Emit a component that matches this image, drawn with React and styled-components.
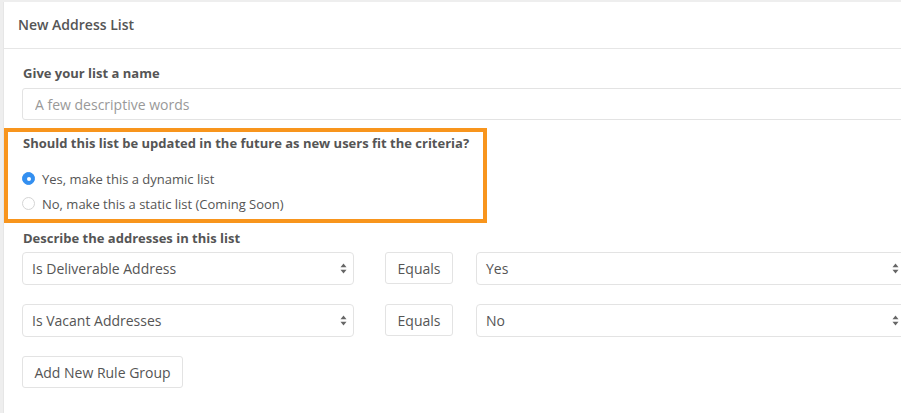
import React from 'react';
import styled, { createGlobalStyle } from 'styled-components';

const GlobalStyle = createGlobalStyle`
  html, body {
    margin: 0;
    padding: 0;
    background: #eeeeee;
    overflow: hidden;
  }

  body {
    font-family: 'Open Sans', 'Liberation Sans', sans-serif;
    color: #555;
  }

  * {
    box-sizing: border-box;
  }
`;

const Card = styled.section`
  margin: 2px 0 0 3px;
  width: calc(100% + 20px);
  min-height: 420px;
  background: #fff;
  border-left: 1px solid #e6e6e6;
`;

const CardHeader = styled.header`
  height: 47px;
  display: flex;
  align-items: center;
  padding: 0 14px 1px;
  border-bottom: 1px solid #e6e6e6;
  font-size: 14px;
  font-weight: 600;
  color: #555;
`;

const CardBody = styled.div`
  padding-top: 15px;
`;

const Group = styled.div`
  padding: 0 0 0 18px;
  margin-top: ${(p) => p.$top || 0}px;
`;

const Highlight = styled.div`
  width: 483px;
  margin-top: 8px;
  border: 4px solid #f8951d;
  padding: 2px 0 3px 14px;
`;

const Label = styled.div`
  font-size: 13px;
  font-weight: 700;
  line-height: 18px;
  color: #555;
  margin-bottom: ${(p) => p.$gap ?? 6}px;
  padding-left: 1px;
`;

const TextInput = styled.input`
  display: block;
  width: 100%;
  height: 32px;
  padding: 0 12px;
  border: 1px solid #e3e3e3;
  border-radius: 3px;
  font-family: inherit;
  font-size: 14px;
  color: #555;
  outline: none;

  &::placeholder {
    color: #999;
  }
`;

const RadioList = styled.div`
  margin-top: 14px;
  display: flex;
  flex-direction: column;
`;

const RadioRow = styled.label`
  height: 25px;
  display: flex;
  align-items: center;
  gap: 7px;
  font-size: 13px;
  color: #555;
`;

const RadioDot = styled.span`
  width: 13px;
  height: 13px;
  border-radius: 50%;
  flex: none;
  display: flex;
  align-items: center;
  justify-content: center;
  background: ${(p) => (p.$checked ? '#338ff0' : '#fff')};
  border: 1px solid ${(p) => (p.$checked ? '#338ff0' : '#d4d4d4')};

  &::after {
    content: '';
    width: 4px;
    height: 4px;
    border-radius: 50%;
    background: #fff;
    display: ${(p) => (p.$checked ? 'block' : 'none')};
  }
`;

const RuleList = styled.div`
  display: flex;
  flex-direction: column;
  gap: 19px;
`;

const RuleRow = styled.div`
  display: grid;
  grid-template-columns: 332px 68px 422px;
  column-gap: 31px;

  & > :last-child {
    margin-left: -8px;
  }
`;

const Select = styled.div`
  height: 33px;
  display: flex;
  align-items: center;
  justify-content: space-between;
  padding: 0 6px 0 9px;
  border: 1px solid #e3e3e3;
  border-radius: 4px;
  font-size: 14px;
  color: #555;
`;

const Operator = styled.div`
  height: 32px;
  display: flex;
  align-items: center;
  justify-content: center;
  border: 1px solid #e3e3e3;
  border-radius: 3px;
  font-size: 14px;
  color: #555;
`;

const Button = styled.button`
  margin-top: 19px;
  height: 32px;
  width: 161px;
  padding: 0;
  background: #fff;
  border: 1px solid #e3e3e3;
  border-radius: 3px;
  font-family: inherit;
  font-size: 14px;
  color: #555;
`;

const Arrows = () => (
  <svg width="7" height="11" viewBox="0 0 7 11">
    <path d="M3.5 0.5 L6.5 4.3 L0.5 4.3 Z" fill="#666" />
    <path d="M3.5 10.5 L6.5 6.7 L0.5 6.7 Z" fill="#666" />
  </svg>
);

const rules = [
  { field: 'Is Deliverable Address', op: 'Equals', value: 'Yes' },
  { field: 'Is Vacant Addresses', op: 'Equals', value: 'No' },
];

const App = () => (
  <>
    <GlobalStyle />
    <Card>
      <CardHeader>New Address List</CardHeader>
      <CardBody>
        <Group>
          <Label>Give your list a name</Label>
          <TextInput placeholder="A few descriptive words" />
        </Group>

        <Highlight>
          <Label $gap={0}>
            Should this list be updated in the future as new users fit the criteria?
          </Label>
          <RadioList>
            <RadioRow>
              <RadioDot $checked />
              Yes, make this a dynamic list
            </RadioRow>
            <RadioRow>
              <RadioDot />
              No, make this a static list (Coming Soon)
            </RadioRow>
          </RadioList>
        </Highlight>

        <Group $top={6}>
          <Label $gap={5}>Describe the addresses in this list</Label>
          <RuleList>
            {rules.map((r) => (
              <RuleRow key={r.field}>
                <Select>
                  {r.field}
                  <Arrows />
                </Select>
                <Operator>{r.op}</Operator>
                <Select>
                  {r.value}
                  <Arrows />
                </Select>
              </RuleRow>
            ))}
          </RuleList>
          <Button>Add New Rule Group</Button>
        </Group>
      </CardBody>
    </Card>
  </>
);

export default App;
